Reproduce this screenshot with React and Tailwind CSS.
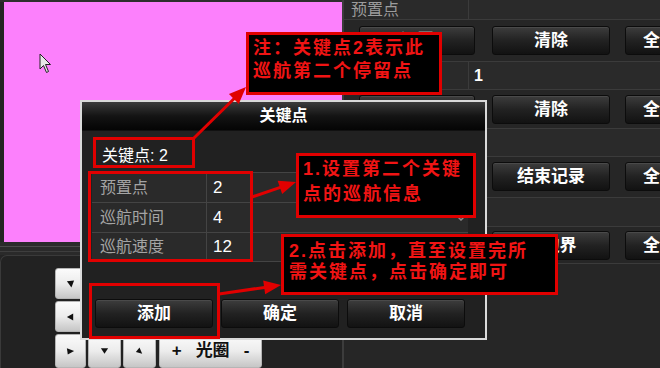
import React from "react";

const FONT = { fontFamily: '"Liberation Sans", "Noto Sans CJK SC", sans-serif' };

function arrowParts(x1, y1, x2, y2) {
  const dx = x2 - x1;
  const dy = y2 - y1;
  const len = Math.hypot(dx, dy);
  const ux = dx / len;
  const uy = dy / len;
  const hl = 17;
  const hw = 7;
  const bx = x2 - ux * hl;
  const by = y2 - uy * hl;
  const px = -uy;
  const py = ux;
  return {
    line: [x1, y1, bx + ux * 2, by + uy * 2],
    head: `${x2},${y2} ${bx + px * hw},${by + py * hw} ${bx - px * hw},${by - py * hw}`,
  };
}

const ARROWS = [
  [194, 138, 246, 87],
  [252, 197, 296, 182],
  [219, 294, 281, 285],
];

// small ptz glyphs, drawn as they look in the ref
const TRI = {
  downRight: "1,2 9,1 6,9",
  left: "8,1 8,9 1,5",
  upRight: "1,2 9,5 2,9",
  down: "1,2 9,2 5,8",
  upLeft: "5,1 8,8 1,6",
};

function DarkButton({ children, className = "" }) {
  return (
    <div
      className={
        "h-[29px] flex items-center justify-center rounded-[3px] border border-[#0c0c0c] bg-linear-to-b from-[#3d3d3d] via-[#222] to-[#121212] text-white font-bold text-[17px] shadow-[inset_0_1px_0_#4a4a4a] " +
        className
      }
    >
      {children}
    </div>
  );
}

function Tri({ kind }) {
  return (
    <svg width="9" height="10" viewBox="0 0 10 10">
      <polygon points={TRI[kind]} fill="#111" />
    </svg>
  );
}

function LightButton({ className = "", children }) {
  return (
    <div
      className={
        "flex items-center justify-center rounded-[3px] border border-[#b5b5b5] bg-linear-to-b from-[#fbfbfb] via-[#ececec] to-[#c6c6c6] " +
        className
      }
    >
      {children}
    </div>
  );
}

function LabelRow({ h, label, value }) {
  return (
    <div className={"flex border-b border-[#3b3b3b] bg-[#2a2a2a] " + h}>
      <div className="w-[125px] border-r border-[#3b3b3b] pl-[7px] flex items-center text-[#9c9c9c] text-[16px]">
        {label}
      </div>
      <div className="flex-1 pl-[5px] flex items-center text-white text-[16px] font-bold">{value}</div>
    </div>
  );
}

function BtnRow({ h, pt, labels }) {
  return (
    <div className={"flex border-b border-[#3b3b3b] bg-[#262626] pl-[15px] " + h + " " + pt}>
      <DarkButton className="w-[116px] shrink-0">{labels[0]}</DarkButton>
      <DarkButton className="w-[118px] shrink-0 ml-[17px]">{labels[1]}</DarkButton>
      <DarkButton className="w-[118px] shrink-0 ml-[15px] justify-start pl-[17px]">{labels[2]}</DarkButton>
    </div>
  );
}

function Note({ className, children }) {
  return (
    <div
      className={
        "absolute bg-black border-[3px] border-[#e10000] text-[#f01414] font-bold text-[18px] tracking-[2px] whitespace-nowrap " +
        className
      }
    >
      {children}
    </div>
  );
}

export default function App() {
  return (
    <div className="relative w-[660px] h-[368px] overflow-hidden bg-[#242424] flex" style={FONT}>
      {/* left: video + ptz */}
      <div className="w-[345px] flex flex-col">
        <div className="h-[2px] bg-[#2e2e2e]" />
        <div className="flex pl-[4px]">
          <div className="w-[338px] h-[240px] bg-[#fc80fc]" />
        </div>
        <div className="h-[16px] bg-[#2a2a2a] flex flex-col pt-[4px] gap-[4px]">
          <div className="h-px bg-[#4a4a4a]" />
          <div className="h-px bg-[#3e3e3e]" />
        </div>
        <div className="flex-1 bg-[#222] border-t border-l border-[#3a3a3a] rounded-tl-[7px] pl-[54px] pt-[12px] flex flex-col gap-[2px]">
          <div className="flex gap-[2px]">
            <LightButton className="w-[31px] h-[31px]">
              <Tri kind="downRight" />
            </LightButton>
            <LightButton className="w-[33px] h-[31px]" />
            <LightButton className="w-[33px] h-[31px]" />
          </div>
          <div className="flex gap-[2px]">
            <LightButton className="w-[31px] h-[31px]">
              <Tri kind="left" />
            </LightButton>
            <LightButton className="w-[33px] h-[31px]" />
            <LightButton className="w-[33px] h-[31px]" />
          </div>
          <div className="flex gap-[2px]">
            <LightButton className="w-[31px] h-[34px]">
              <Tri kind="upRight" />
            </LightButton>
            <LightButton className="w-[33px] h-[34px]">
              <Tri kind="down" />
            </LightButton>
            <LightButton className="w-[33px] h-[34px]">
              <Tri kind="upLeft" />
            </LightButton>
            <LightButton className="w-[103px] h-[34px] ml-[1px] gap-[14px] text-[17px] font-bold text-[#111]">
              <span>+</span>
              <span>光圈</span>
              <span>-</span>
            </LightButton>
          </div>
        </div>
      </div>

      {/* right panel */}
      <div className="flex-1 flex flex-col border-l-2 border-[#3c3c3c] bg-[#262626]">
        <LabelRow h="h-[20px]" label="预置点" />
        <BtnRow h="h-[42px]" pt="pt-[6px]" labels={["设置", "清除", "全部清除"]} />
        <LabelRow h="h-[28px]" label="" value="1" />
        <BtnRow h="h-[39px]" pt="pt-[5px]" labels={["设置", "清除", "全部清除"]} />
        <LabelRow h="h-[28px]" label="" value="" />
        <BtnRow h="h-[41px]" pt="pt-[5px]" labels={["开始记录", "结束记录", "全部清除"]} />
        <LabelRow h="h-[29px]" label="" value="" />
        <BtnRow h="h-[37px]" pt="pt-[4px]" labels={["左边界", "右边界", "全部清除"]} />
      </div>

      {/* cursor */}
      <svg className="absolute left-[39px] top-[53px]" width="13" height="21" viewBox="0 0 13 21">
        <path d="M1 1 L1 16 L4.5 12.5 L7.5 19.5 L9.5 18.5 L6.5 11.5 L11.5 11.5 Z" fill="#e8e8e8" stroke="#222" strokeWidth="1" />
      </svg>

      {/* dialog */}
      <div className="absolute left-[80px] top-[100px] w-[407px] h-[240px] border-2 border-[#dadada] bg-[#212121] flex flex-col">
        <div className="h-[29px] shrink-0 bg-linear-to-b from-[#3c3c3c] via-[#141414] to-[#050505] border-b border-[#111] flex items-center justify-center text-white text-[16px] font-bold">
          关键点
        </div>
        <div className="flex flex-col pl-[10px] pr-[17px]">
          <div className="h-[16px] mt-[17px] pl-[10px] leading-[16px] text-white text-[16px]">关键点: 2</div>
          <div className="mt-[8px] flex flex-col border-t border-[#444] bg-[#2a2a2a]">
            {[
              ["预置点", "2", "h-[30px]"],
              ["巡航时间", "4", "h-[30px]"],
              ["巡航速度", "12", "h-[29px]"],
            ].map(([k, v, h], i) => (
              <div key={k} className={"relative flex border-b border-[#444] " + h}>
                <div className="w-[115px] border-r border-[#444] pl-[8px] flex items-center text-[#a4a4a4] text-[16px]">
                  {k}
                </div>
                <div className="flex-1 pl-[6px] flex items-center text-white text-[17px]">{v}</div>
                {i === 1 && (
                  <svg className="absolute right-[2px] top-[12px]" width="10" height="6" viewBox="0 0 10 6">
                    <path d="M1 1 L5 5 L9 1" fill="none" stroke="#8a8a8a" strokeWidth="1.5" />
                  </svg>
                )}
              </div>
            ))}
          </div>
          <div className="flex mt-[37px] pl-[3px] gap-[8px]">
            <DarkButton className="w-[118px]">添加</DarkButton>
            <DarkButton className="w-[118px]">确定</DarkButton>
            <DarkButton className="w-[118px]">取消</DarkButton>
          </div>
        </div>
      </div>

      {/* red outlines */}
      <div className="absolute left-[93px] top-[137px] w-[102px] h-[31px] border-[3px] border-[#e10000]" />
      <div className="absolute left-[88px] top-[171px] w-[165px] h-[91px] border-[3px] border-[#e10000]" />
      <div className="absolute left-[89px] top-[283px] w-[131px] h-[56px] border-[3px] border-[#e10000]" />

      <svg className="absolute left-0 top-0 pointer-events-none" width="660" height="368">
        {ARROWS.map((a, i) => {
          const p = arrowParts(...a);
          return (
            <g key={i}>
              <line x1={p.line[0]} y1={p.line[1]} x2={p.line[2]} y2={p.line[3]} stroke="#e10000" strokeWidth="3" />
              <polygon points={p.head} fill="#e10000" />
            </g>
          );
        })}
      </svg>

      {/* notes */}
      <Note className="left-[246px] top-[32px] w-[196px] h-[63px] pl-[4px] pt-[2px] leading-[23px]">
        <div>注：关键点2表示此</div>
        <div>巡航第二个停留点</div>
      </Note>
      <Note className="left-[296px] top-[153px] w-[180px] h-[65px] pl-[4px] pt-[1px] leading-[25px]">
        <div>1.设置第二个关键</div>
        <div>点的巡航信息</div>
      </Note>
      <Note className="left-[281px] top-[234px] w-[277px] h-[61px] pl-[5px] pt-[4px] leading-[21px]">
        <div>2.点击添加，直至设置完所</div>
        <div>需关键点，点击确定即可</div>
      </Note>
    </div>
  );
}
